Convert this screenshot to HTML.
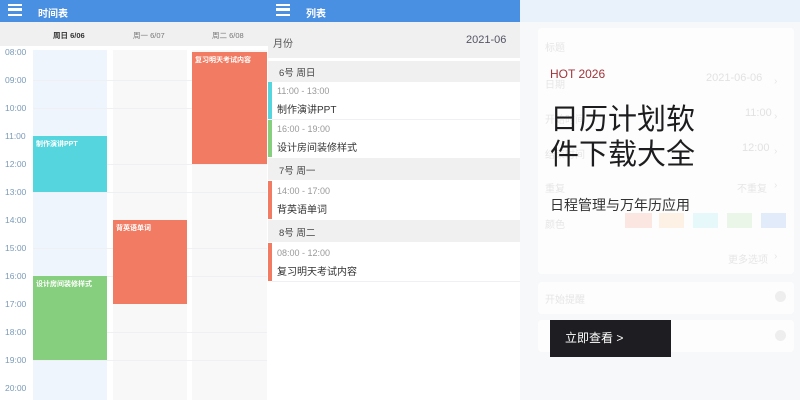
<!DOCTYPE html>
<html><head><meta charset="utf-8"><style>
*{margin:0;padding:0;box-sizing:border-box}
body{width:800px;height:400px;overflow:hidden;position:relative;background:#fff;font-family:"Liberation Sans","Noto Sans CJK SC",sans-serif}
.a{position:absolute}
.hdr{background:#4a90e2;height:22px;top:0}
.menu{width:14px;height:12px;border-top:2.5px solid #fff;border-bottom:2.5px solid #fff;top:4px}
.menu:after{content:"";position:absolute;left:0;right:0;top:2.2px;height:2.5px;background:#fff}
.ht{color:#fff;font-size:10px;top:5px;font-weight:bold}
.tl{font-size:8.5px;color:#7a9ab8;left:5px}
.line{height:1px;background:#eef0f3}
.ev{color:#fff;font-size:7px;font-weight:bold;padding:3px 3px}
.li{font-size:10px;color:#333}
.fl{font-size:10px;color:#e6e6e6}
.fv{font-size:11px;color:#e2e2e2}
</style></head><body>
<div class="a hdr" style="left:0;width:268px"></div>
<div class="a menu" style="left:8px"></div>
<div class="a ht" style="left:38px">时间表</div>
<div class="a" style="left:0;top:22px;width:268px;height:24px;background:#f0f0f0"></div>
<div class="a" style="left:53px;top:30px;font-size:7.5px;font-weight:bold;color:#333">周日 6/06</div>
<div class="a" style="left:133px;top:30px;font-size:7.5px;color:#777">周一 6/07</div>
<div class="a" style="left:212px;top:30px;font-size:7.5px;color:#777">周二 6/08</div>
<div class="a" style="left:33px;top:50px;width:74px;height:350px;background:#eef5fd"></div>
<div class="a" style="left:113px;top:50px;width:74px;height:350px;background:#f8f8f9"></div>
<div class="a" style="left:192px;top:50px;width:75px;height:350px;background:#f8f8f9"></div>
<div class="a tl" style="top:47px">08:00</div>
<div class="a tl" style="top:75px">09:00</div>
<div class="a tl" style="top:103px">10:00</div>
<div class="a tl" style="top:131px">11:00</div>
<div class="a tl" style="top:159px">12:00</div>
<div class="a tl" style="top:187px">13:00</div>
<div class="a tl" style="top:215px">14:00</div>
<div class="a tl" style="top:243px">15:00</div>
<div class="a tl" style="top:271px">16:00</div>
<div class="a tl" style="top:299px">17:00</div>
<div class="a tl" style="top:327px">18:00</div>
<div class="a tl" style="top:355px">19:00</div>
<div class="a tl" style="top:383px">20:00</div>
<div class="a line" style="left:33px;width:234px;top:80px"></div>
<div class="a line" style="left:33px;width:234px;top:108px"></div>
<div class="a line" style="left:33px;width:234px;top:164px"></div>
<div class="a line" style="left:33px;width:234px;top:192px"></div>
<div class="a line" style="left:33px;width:234px;top:248px"></div>
<div class="a line" style="left:33px;width:234px;top:276px"></div>
<div class="a line" style="left:33px;width:234px;top:332px"></div>
<div class="a line" style="left:33px;width:234px;top:360px"></div>
<div class="a ev" style="left:33px;top:136px;width:74px;height:56px;background:#55d6de">制作演讲PPT</div>
<div class="a ev" style="left:33px;top:276px;width:74px;height:84px;background:#86cf7e">设计房间装修样式</div>
<div class="a ev" style="left:113px;top:220px;width:74px;height:84px;background:#f27c63">背英语单词</div>
<div class="a ev" style="left:192px;top:52px;width:75px;height:112px;background:#f27c63">复习明天考试内容</div>
<div class="a hdr" style="left:268px;width:252px"></div>
<div class="a menu" style="left:276px"></div>
<div class="a ht" style="left:306px">列表</div>
<div class="a" style="left:268px;top:22px;width:252px;height:36px;background:#f0f0f0"></div>
<div class="a" style="left:273px;top:35px;font-size:10px;color:#555">月份</div>
<div class="a" style="left:466px;top:34px;font-size:11px;color:#556">2021-06</div>
<div class="a" style="left:268px;top:61px;width:252px;height:21px;background:#f0f0f0"></div>
<div class="a" style="left:279px;top:65px;font-size:9.5px;color:#444">6号 周日</div>
<div class="a" style="left:268px;top:82px;width:4px;height:37px;background:#55d6de"></div>
<div class="a" style="left:277px;top:86px;font-size:9px;color:#999">11:00 - 13:00</div>
<div class="a li" style="left:277px;top:101px">制作演讲PPT</div>
<div class="a line" style="left:272px;width:248px;top:119px"></div>
<div class="a" style="left:268px;top:120px;width:4px;height:37px;background:#86cf7e"></div>
<div class="a" style="left:277px;top:124px;font-size:9px;color:#999">16:00 - 19:00</div>
<div class="a li" style="left:277px;top:139px">设计房间装修样式</div>
<div class="a" style="left:268px;top:158px;width:252px;height:22px;background:#f0f0f0"></div>
<div class="a" style="left:279px;top:163px;font-size:9.5px;color:#444">7号 周一</div>
<div class="a" style="left:268px;top:181px;width:4px;height:38px;background:#f27c63"></div>
<div class="a" style="left:277px;top:186px;font-size:9px;color:#999">14:00 - 17:00</div>
<div class="a li" style="left:277px;top:201px">背英语单词</div>
<div class="a" style="left:268px;top:220px;width:252px;height:22px;background:#f0f0f0"></div>
<div class="a" style="left:279px;top:225px;font-size:9.5px;color:#444">8号 周二</div>
<div class="a" style="left:268px;top:243px;width:4px;height:38px;background:#f27c63"></div>
<div class="a" style="left:277px;top:248px;font-size:9px;color:#999">08:00 - 12:00</div>
<div class="a li" style="left:277px;top:263px">复习明天考试内容</div>
<div class="a line" style="left:272px;width:248px;top:281px"></div>
<div class="a" style="left:520px;top:0;width:280px;height:400px;background:#f7f8fa"></div>
<div class="a" style="left:520px;top:0;width:280px;height:22px;background:#e9f1fb"></div>
<div class="a" style="left:538px;top:28px;width:256px;height:246px;background:#fdfdfd;border-radius:4px"></div>
<div class="a" style="left:538px;top:282px;width:256px;height:32px;background:#fdfdfd;border-radius:4px"></div>
<div class="a" style="left:538px;top:320px;width:256px;height:32px;background:#fdfdfd;border-radius:4px"></div>
<div class="a fl" style="left:545px;top:39px">标题</div>
<div class="a fl" style="left:545px;top:76px">日期</div>
<div class="a fl" style="left:545px;top:111px">开始时间</div>
<div class="a fl" style="left:545px;top:146px">结束时间</div>
<div class="a fl" style="left:545px;top:180px">重复</div>
<div class="a fl" style="left:545px;top:216px">颜色</div>
<div class="a fl" style="left:737px;top:180px">不重复</div>
<div class="a fl" style="left:728px;top:251px">更多选项</div>
<div class="a fl" style="left:545px;top:291px">开始提醒</div>
<div class="a fl" style="left:774px;top:76px">›</div>
<div class="a fl" style="left:774px;top:111px">›</div>
<div class="a fl" style="left:774px;top:146px">›</div>
<div class="a fl" style="left:774px;top:180px">›</div>
<div class="a fl" style="left:774px;top:251px">›</div>
<div class="a" style="left:775px;top:291px;width:11px;height:11px;border-radius:50%;background:#eee"></div>
<div class="a" style="left:775px;top:330px;width:11px;height:11px;border-radius:50%;background:#eee"></div>
<div class="a" style="left:625px;top:213px;width:27px;height:15px;background:#fbe6e2"></div>
<div class="a" style="left:659px;top:213px;width:25px;height:15px;background:#fdf0e4"></div>
<div class="a" style="left:693px;top:213px;width:25px;height:15px;background:#e6f8fa"></div>
<div class="a" style="left:727px;top:213px;width:25px;height:15px;background:#e9f6e8"></div>
<div class="a" style="left:761px;top:213px;width:25px;height:15px;background:#e2ebfa"></div>
<div class="a fv" style="left:706px;top:72px">2021-06-06</div>
<div class="a fv" style="left:745px;top:107px">11:00</div>
<div class="a fv" style="left:742px;top:142px">12:00</div>
<div class="a" style="left:550px;top:67px;font-size:12px;color:#a0343a">HOT 2026</div>
<div class="a" style="left:550px;top:103px;font-size:29px;line-height:35px;color:#1d1d1f">日历计划软<br>件下载大全</div>
<div class="a" style="left:550px;top:195px;font-size:14px;color:#333">日程管理与万年历应用</div>
<div class="a" style="left:550px;top:320px;width:121px;height:37px;background:#1e1e22;color:#fff;font-size:12px;line-height:37px;padding-left:15px">立即查看 &gt;</div>
</body></html>
